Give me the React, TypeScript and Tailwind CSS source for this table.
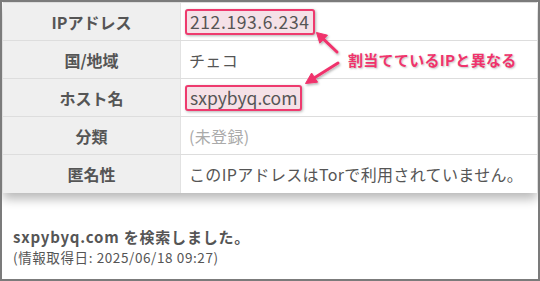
import React from 'react';

function Mark({ children, wide = false }: { children: React.ReactNode; wide?: boolean }) {
    return (
        <span
            className={`inline-block -ml-[4px] px-[3px] rounded-[3px] border-2 border-[#ee3a6e] bg-[#f5e1e7] shadow-[1px_1px_3px_rgba(0,0,0,0.3)] leading-[22px] text-[17.5px] ${wide ? 'tracking-[0.6px]' : 'tracking-[0px]'}`}
        >
            {children}
        </span>
    );
}

const rows: { label: string; value: React.ReactNode }[] = [
    { label: 'IPアドレス', value: <Mark wide>212.193.6.234</Mark> },
    { label: '国/地域', value: 'チェコ' },
    { label: 'ホスト名', value: <Mark>sxpybyq.com</Mark> },
    { label: '分類', value: <span className="text-[#aaa]">(未登録)</span> },
    { label: '匿名性', value: 'このIPアドレスはTorで利用されていません。' },
];

export default function App() {
    return (
        <div
            className="relative w-[540px] h-[281px] border-2 border-[#7b7b7b] bg-white overflow-hidden text-[#555]"
            style={{ fontFamily: '"Noto Sans CJK JP", "Noto Sans", sans-serif' }}
        >
            {/* Table */}
            <div className="mx-[1px] border-t border-[#ddd] shadow-[0_6px_10px_rgba(0,0,0,0.28)]">
                {rows.map((row, i) => (
                    <div key={i} className={`flex h-[38px] ${i < rows.length - 1 ? 'border-b border-[#ddd]' : ''}`}>
                        <div className="w-[178px] shrink-0 bg-[#efefef] border-r border-[#e2e2e2] flex items-center justify-center text-[16px] font-bold">
                            {row.label}
                        </div>
                        <div className="flex-1 flex items-center pl-[8px] text-[16px] tracking-[0.35px]">
                            {row.value}
                        </div>
                    </div>
                ))}
            </div>

            {/* Annotation arrows */}
            <svg className="absolute left-0 top-0" width="540" height="120" viewBox="0 0 540 120">
                <defs>
                    <filter id="sh" x="-30%" y="-30%" width="160%" height="160%">
                        <feDropShadow dx="1" dy="1.5" stdDeviation="1.2" floodColor="#000" floodOpacity="0.3" />
                    </filter>
                </defs>
                <g fill="#f0336c" stroke="#f0336c" filter="url(#sh)">
                    <line x1="335" y1="50" x2="321.5" y2="37.2" strokeWidth="3" strokeLinecap="round" />
                    <polygon points="314.5,30.5 325.5,33.2 317.8,41.2" strokeWidth="1" strokeLinejoin="round" />
                    <line x1="336" y1="61" x2="312.5" y2="75.7" strokeWidth="3" strokeLinecap="round" />
                    <polygon points="303.5,81.5 315.6,80.2 309.6,71" strokeWidth="1" strokeLinejoin="round" />
                </g>
            </svg>
            <div className="absolute left-[346px] top-[47px] text-[15px] font-bold text-[#f0336c] tracking-[0.3px] [text-shadow:1px_1px_2px_rgba(0,0,0,0.25)]">
                割当てているIPと異なる
            </div>

            {/* Footer text */}
            <div className="pl-[11px] pt-[33px]">
                <div className="text-[15px] font-bold leading-[21px] tracking-[0.8px]">sxpybyq.com を検索しました。</div>
                <div className="text-[13.5px] leading-[20px] tracking-[0.6px]">(情報取得日: 2025/06/18 09:27)</div>
            </div>
        </div>
    );
}
